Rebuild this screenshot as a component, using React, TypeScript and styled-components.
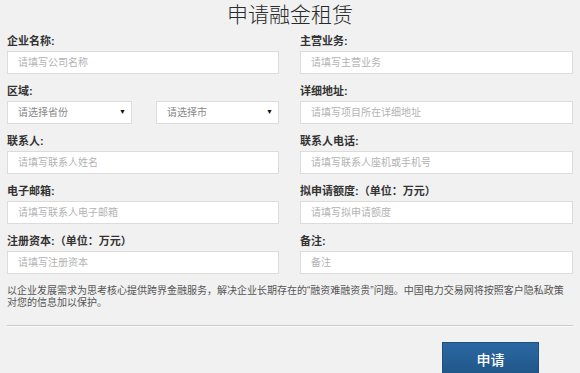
import React from 'react'
import styled, { createGlobalStyle } from 'styled-components'

const GlobalStyle = createGlobalStyle`
  html, body {
    margin: 0;
    padding: 0;
    background: #f1f1f1;
    font-family: "Liberation Sans", "Noto Sans CJK SC", sans-serif;
    color: #333;
  }
`

const Page = styled.div`
  width: 580px;
  padding: 0 7px;
  box-sizing: border-box;
`

const Title = styled.h1`
  margin: 0 0 4px;
  height: 30px;
  line-height: 30px;
  font-size: 21px;
  font-weight: 300;
  text-align: center;
  color: #2a2a2a;
`

const FormGrid = styled.div`
  display: grid;
  grid-template-columns: 272px 273px;
  column-gap: 21px;
  row-gap: 10px;
`

const Field = styled.div`
  display: flex;
  flex-direction: column;
`

const Label = styled.label`
  height: 14px;
  line-height: 14px;
  margin-bottom: 3px;
  font-size: 11px;
  font-weight: 700;
  color: #333;
`

const Input = styled.input`
  height: 23px;
  box-sizing: border-box;
  border: 1px solid #dcdcdc;
  background: #fff;
  padding: 0 10px;
  font-size: 10px;
  font-family: inherit;
  outline: none;
  &::placeholder {
    color: #b3b3b3;
  }
`

const SelectRow = styled.div`
  display: grid;
  grid-template-columns: 125px 123px;
  justify-content: space-between;
`

const SelectWrap = styled.div`
  position: relative;
  height: 23px;
`

const Select = styled.select`
  appearance: none;
  width: 100%;
  height: 100%;
  box-sizing: border-box;
  border: 1px solid #dcdcdc;
  background: #fff;
  padding: 0 10px;
  font-size: 10px;
  font-family: inherit;
  color: #888;
  outline: none;
`

const Arrow = styled.span`
  position: absolute;
  right: 6px;
  top: 7px;
  font-size: 7px;
  line-height: 8px;
  color: #111;
  pointer-events: none;
`

const Notice = styled.p`
  margin: 11px 0 0;
  font-size: 10px;
  line-height: 12px;
  color: #555;
  padding-right: 4px;
`

const Divider = styled.hr`
  margin: 16px 0 0;
  border: 0;
  border-top: 1px solid #c9c9c9;
  border-bottom: 1px solid #fafafa;
`

const Actions = styled.div`
  display: flex;
  justify-content: flex-end;
  padding: 15px 34px 0 0;
`

const SubmitButton = styled.button`
  width: 97px;
  height: 34px;
  border: 1px solid #1d4f80;
  background: linear-gradient(#2d68a3, #1f5689);
  color: #fff;
  font-size: 14px;
  font-family: inherit;
  font-weight: 500;
  cursor: pointer;
`

function SelectBox({ label }: { label: string }) {
  return (
    <SelectWrap>
      <Select defaultValue=''>
        <option value=''>{label}</option>
      </Select>
      <Arrow>▼</Arrow>
    </SelectWrap>
  )
}

const fields = [
  { left: { label: '企业名称:', ph: '请填写公司名称' }, right: { label: '主营业务:', ph: '请填写主营业务' } },
  { left: null, right: { label: '详细地址:', ph: '请填写项目所在详细地址' } },
  { left: { label: '联系人:', ph: '请填写联系人姓名' }, right: { label: '联系人电话:', ph: '请填写联系人座机或手机号' } },
  { left: { label: '电子邮箱:', ph: '请填写联系人电子邮箱' }, right: { label: '拟申请额度:（单位：万元）', ph: '请填写拟申请额度' } },
  { left: { label: '注册资本:（单位：万元）', ph: '请填写注册资本' }, right: { label: '备注:', ph: '备注' } }
]

export default function App() {
  return (
    <Page>
      <GlobalStyle />
      <Title>申请融金租赁</Title>
      <FormGrid>
        {fields.map((row, i) => (
          <React.Fragment key={i}>
            {row.left ? (
              <Field>
                <Label>{row.left.label}</Label>
                <Input placeholder={row.left.ph} />
              </Field>
            ) : (
              <Field>
                <Label>区域:</Label>
                <SelectRow>
                  <SelectBox label='请选择省份' />
                  <SelectBox label='请选择市' />
                </SelectRow>
              </Field>
            )}
            <Field>
              <Label>{row.right.label}</Label>
              <Input placeholder={row.right.ph} />
            </Field>
          </React.Fragment>
        ))}
      </FormGrid>
      <Notice>
        以企业发展需求为思考核心提供跨界金融服务，解决企业长期存在的“融资难融资贵”问题。中国电力交易网将按照客户隐私政策对您的信息加以保护。
      </Notice>
      <Divider />
      <Actions>
        <SubmitButton>申请</SubmitButton>
      </Actions>
    </Page>
  )
}
